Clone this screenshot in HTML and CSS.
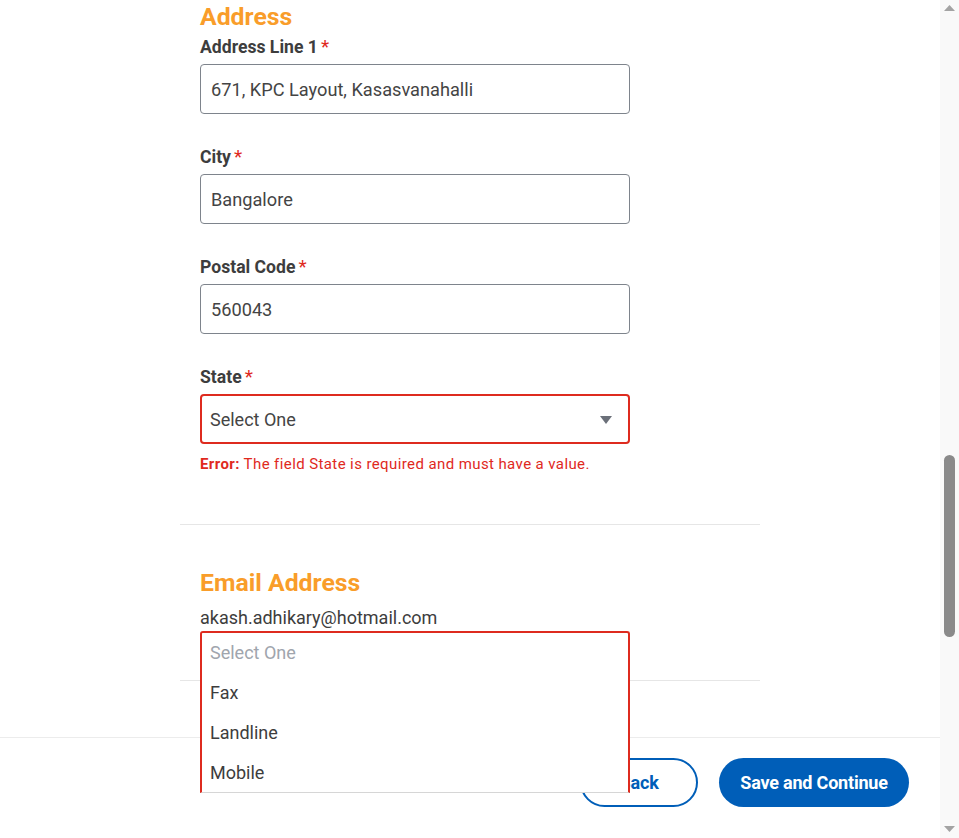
FILE: index.html
```html
<!DOCTYPE html>
<html lang="en">
<head>
<meta charset="utf-8">
<title>Address</title>
<link rel="stylesheet" href="styles.css">
</head>
<body>
<div class="window">
  <div class="page">
    <main class="content">
      <div class="form">
        <section class="section">
          <h2 class="heading">Address</h2>
          <div class="field">
            <label class="label">Address Line 1<span class="req">*</span></label>
            <div class="input">671, KPC Layout, Kasasvanahalli</div>
          </div>
          <div class="field">
            <label class="label">City<span class="req">*</span></label>
            <div class="input">Bangalore</div>
          </div>
          <div class="field">
            <label class="label">Postal Code<span class="req">*</span></label>
            <div class="input">560043</div>
          </div>
          <div class="field field-last">
            <label class="label">State<span class="req">*</span></label>
            <div class="input select error">
              <span>Select One</span>
              <svg class="caret" width="12" height="8" viewBox="0 0 12 8"><path d="M0 0h12L6 8z" fill="#6b7079"/></svg>
            </div>
            <p class="error-text"><b>Error:</b> The field State is required and must have a value.</p>
          </div>
        </section>
        <hr class="rule rule-first">
        <section class="section">
          <h2 class="heading heading-email">Email Address</h2>
          <p class="email">akash.adhikary@hotmail.com</p>
          <div class="select-wrap">
            <ul class="listbox">
              <li class="option placeholder">Select One</li>
              <li class="option">Fax</li>
              <li class="option">Landline</li>
              <li class="option">Mobile</li>
            </ul>
          </div>
        </section>
        <hr class="rule rule-last">
      </div>
    </main>
    <footer class="footer">
      <button class="btn btn-outline">Back</button>
      <button class="btn btn-primary">Save and Continue</button>
    </footer>
  </div>
  <div class="scrollbar">
    <svg class="arrow" width="11" height="6" viewBox="0 0 11 6"><path d="M0 6L5.5 0 11 6z" fill="#a3a3a3"/></svg>
    <div class="track"><div class="thumb"></div></div>
    <svg class="arrow" width="11" height="6" viewBox="0 0 11 6"><path d="M0 0h11L5.5 6z" fill="#a3a3a3"/></svg>
  </div>
</div>
</body>
</html>
```

FILE: styles.css
```css
* { box-sizing: border-box; }
html, body { margin: 0; padding: 0; height: 100%; }
body {
  font-family: Roboto, "Liberation Sans", Arial, sans-serif;
  color: #3d3d3d;
  background: #fff;
}
.window { display: flex; height: 838px; width: 959px; overflow: hidden; }
.page { flex: 1; display: flex; flex-direction: column; min-width: 0; }
.content { flex: 1; min-height: 0; }
.form { width: 580px; margin-left: 180px; }
.section { padding-left: 20px; }
.heading {
  margin: 0;
  font-size: 24.8px;
  line-height: 30px;
  font-weight: 700;
  color: #f99d2a;
  padding-top: 2px;
}
.field { margin-top: 4px; margin-bottom: 32px; }
.field-last { margin-bottom: 0; }
.label {
  display: block;
  height: 21px;
  padding-top: 1px;
  font-size: 17.6px;
  line-height: 20px;
  font-weight: 700;
  color: #3d3d3d;
  margin-bottom: 7px;
}
.req {
  color: #e0291d;
  margin-left: 3px;
  font-weight: 400;
  font-size: 19px;
  line-height: 0;
}
.input {
  width: 430px;
  height: 50px;
  border: 1px solid #7e848c;
  border-radius: 4px;
  padding: 0 10px;
  display: flex;
  align-items: center;
  font-size: 18.2px;
  color: #444;
}
.select { justify-content: space-between; padding: 0 16px 0 8px; font-size: 18px; }
.select.error { border: 2px solid #de2b1f; }
.caret { margin-top: 1px; }
.error-text {
  margin: 10px 0 0;
  font-size: 15px;
  line-height: 20px;
  color: #e0291d;
  letter-spacing: 0.4px;
}
.error-text b { font-weight: 700; }
.rule { border: 0; border-top: 1px solid #e6e6e6; margin: 50px 0 0; height: 0; }
.heading-email { margin-top: 41px; }
.email {
  margin: 8px 0 0;
  font-size: 18px;
  line-height: 24px;
  color: #3d3d3d;
}
.select-wrap { position: relative; width: 430px; height: 49px; margin-top: 1px; }
.rule-last { margin-top: 0; }
.listbox {
  position: absolute;
  top: 0;
  left: 0;
  z-index: 10;
  width: 430px;
  height: 162px;
  margin: 0;
  padding: 0;
  list-style: none;
  background: #fff;
  border: 2px solid #de2b1f;
  border-bottom: 1px solid #d6d6d6;
  border-radius: 3px 3px 0 0;
  overflow: hidden;
}
.option {
  height: 40px;
  line-height: 40px;
  padding-left: 8px;
  font-size: 18px;
  color: #3d3d3d;
}
.option.placeholder { color: #a0a5ad; }
.footer {
  height: 101px;
  border-top: 1px solid #ececec;
  background: #fff;
  display: flex;
  justify-content: flex-end;
  align-items: flex-start;
  gap: 21px;
  padding: 20px 31px 0 0;
}
.btn {
  height: 49px;
  border-radius: 25px;
  font-family: Roboto, "Liberation Sans", Arial, sans-serif;
  font-size: 18px;
  font-weight: 700;
  letter-spacing: -0.2px;
  cursor: pointer;
}
.btn-outline {
  width: 118px;
  background: #fff;
  border: 2px solid #005eb8;
  color: #005eb8;
}
.btn-primary {
  width: 190px;
  background: #005eb8;
  border: 0;
  color: #fff;
}
.scrollbar {
  width: 19px;
  background: #f9f9f9;
  display: flex;
  flex-direction: column;
  align-items: center;
  padding: 5px 0 6px;
}
.arrow { flex: none; }
.track { flex: 1; width: 100%; padding: 0 4px; }
.thumb {
  width: 11px;
  height: 182px;
  margin-top: 444px;
  background: #8a8a8a;
  border-radius: 6px;
}
```
